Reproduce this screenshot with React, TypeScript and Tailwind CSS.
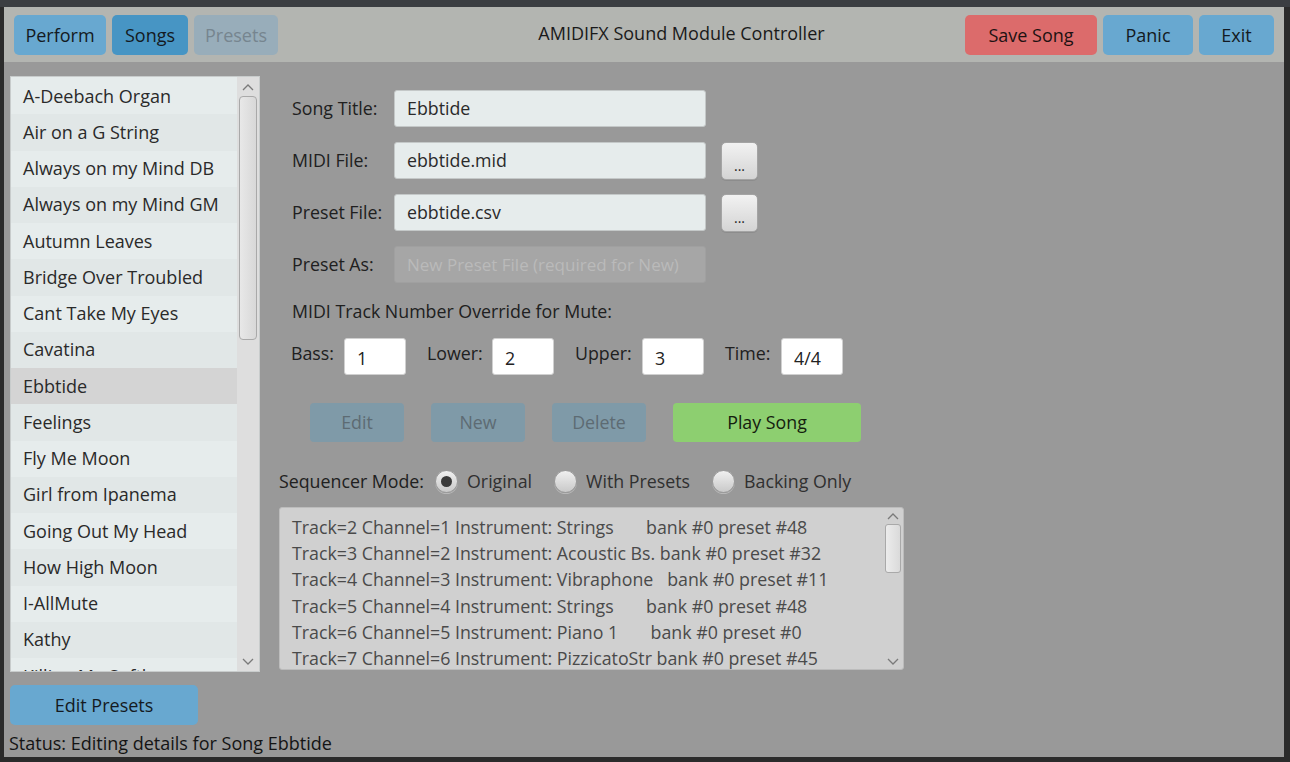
import React from 'react';

const songs = [
    'A-Deebach Organ',
    'Air on a G String',
    'Always on my Mind DB',
    'Always on my Mind GM',
    'Autumn Leaves',
    'Bridge Over Troubled',
    'Cant Take My Eyes',
    'Cavatina',
    'Ebbtide',
    'Feelings',
    'Fly Me Moon',
    'Girl from Ipanema',
    'Going Out My Head',
    'How High Moon',
    'I-AllMute',
    'Kathy',
    'Killing Me Softly',
];

const tracks = [
    'Track=2 Channel=1 Instrument: Strings       bank #0 preset #48',
    'Track=3 Channel=2 Instrument: Acoustic Bs. bank #0 preset #32',
    'Track=4 Channel=3 Instrument: Vibraphone   bank #0 preset #11',
    'Track=5 Channel=4 Instrument: Strings       bank #0 preset #48',
    'Track=6 Channel=5 Instrument: Piano 1       bank #0 preset #0',
    'Track=7 Channel=6 Instrument: PizzicatoStr bank #0 preset #45',
];

const Chevron = ({ up }: { up?: boolean }) => (
    <svg width="12" height="8" viewBox="0 0 12 8" className="block">
        <path
            d={up ? 'M1 7 L6 2 L11 7' : 'M1 1 L6 6 L11 1'}
            fill="none"
            stroke="#7a7a7a"
            strokeWidth="1.3"
        />
    </svg>
);

const Radio = ({ checked, label }: { checked?: boolean; label: string }) => (
    <div className="flex items-center gap-[9px]">
        <div className="w-[23px] h-[23px] rounded-full border border-[#9c9c9c] bg-gradient-to-b from-[#f0f0f0] to-[#c9c9c9] flex items-center justify-center shadow-[0_1px_0_#b8b8b8]">
            {checked && <div className="w-[11px] h-[11px] rounded-full bg-[#3a3a3a]" />}
        </div>
        <span className="text-[#303030]">{label}</span>
    </div>
);

const TopButton = ({ label, cls }: { label: string; cls: string }) => (
    <button className={`h-[40px] rounded-[5px] text-[18px] pt-[2px] ${cls}`}>{label}</button>
);

const FieldRow = ({
    label,
    value,
    browse,
    disabled,
}: {
    label: string;
    value: string;
    browse?: boolean;
    disabled?: boolean;
}) => (
    <div className="flex items-center h-[37px]">
        <span className="w-[102px] text-[#202020]">{label}</span>
        <div
            className={`w-[312px] h-[37px] rounded-[3px] border flex items-center px-[12px] whitespace-nowrap overflow-hidden ${
                disabled
                    ? 'bg-[#a6a6a6] border-[#a0a0a0] text-[#bababa] text-[17px]'
                    : 'bg-[#e6ecec] border-[#c4c8c8] text-[#2a2a2a]'
            }`}
        >
            {value}
        </div>
        {browse && (
            <div className="ml-[15px] w-[37px] h-[38px] rounded-[5px] border border-[#a4a4a4] bg-gradient-to-b from-[#f2f2f2] to-[#d4d4d4] flex items-end justify-center pb-[6px] text-[14px] leading-none text-[#222] shadow-[0_1px_0_#8c8c8c]">
                ...
            </div>
        )}
    </div>
);

const SmallField = ({ label, value, labelW }: { label: string; value: string; labelW: string }) => (
    <div className="flex items-start">
        <span className={`${labelW} pt-[2px] text-[#202020]`}>{label}</span>
        <div className="w-[62px] h-[37px] bg-white rounded-[3px] border border-[#d0d0d0] flex items-center px-[12px] pt-[4px] text-[#222]">
            {value}
        </div>
    </div>
);

export default function App() {
    return (
        <div
            className="w-[1290px] h-[762px] bg-[#2b2b2b] overflow-hidden"
            style={{ fontFamily: '"Open Sans", "Noto Sans", sans-serif' }}
        >
            <div className="h-[7px] bg-[#3b3e42]" />
            <div className="ml-[4px] w-[1280px] h-[750px] bg-[#999999] flex flex-col text-[17.8px]">
                {/* top bar */}
                <div className="h-[56px] bg-[#b3b5b1] flex items-center pl-[10px] pr-[10px]">
                    <div className="flex gap-[6px]">
                        <TopButton label="Perform" cls="w-[92px] bg-[#68a8d0] text-[#141a22]" />
                        <TopButton label="Songs" cls="w-[76px] bg-[#4795c4] text-[#141a22]" />
                        <TopButton label="Presets" cls="w-[84px] bg-[#98adba] text-[#76858f]" />
                    </div>
                    <div className="flex-1 text-center text-[18px] text-[#1a1a1a] pl-[120px] -mt-[2px]">
                        AMIDIFX Sound Module Controller
                    </div>
                    <div className="flex gap-[6px]">
                        <TopButton label="Save Song" cls="w-[132px] bg-[#dc6b6b] text-[#1e1212]" />
                        <TopButton label="Panic" cls="w-[90px] bg-[#68a8d0] text-[#141a22]" />
                        <TopButton label="Exit" cls="w-[75px] bg-[#68a8d0] text-[#141a22]" />
                    </div>
                </div>

                <div className="flex flex-1">
                    {/* left column */}
                    <div className="pl-[6px] pt-[14px] flex flex-col w-[275px]">
                        <div className="w-[250px] h-[596px] flex bg-[#e6ecec] border border-[#c8cccc] overflow-hidden">
                            <div className="flex-1 overflow-hidden pt-[1px]">
                                {songs.map((s, i) => (
                                    <div
                                        key={s}
                                        className={`h-[36.25px] flex items-center pl-[12px] text-[18px] text-[#2a2a2a] whitespace-nowrap ${
                                            s === 'Ebbtide'
                                                ? 'bg-[#d4d4d4]'
                                                : i % 2 === 0
                                                  ? 'bg-[#e6ecec]'
                                                  : 'bg-[#e1e7e7]'
                                        }`}
                                    >
                                        {s}
                                    </div>
                                ))}
                            </div>
                            <div className="w-[22px] bg-[#dedede] flex flex-col items-center pt-[6px] pb-[5px]">
                                <Chevron up />
                                <div className="mt-[5px] w-[18px] h-[244px] rounded-[4px] border border-[#a9a9a9] bg-gradient-to-r from-[#e8e8e8] to-[#d8d8d8]" />
                                <div className="flex-1" />
                                <Chevron />
                            </div>
                        </div>
                        <button className="mt-[13px] w-[188px] h-[40px] rounded-[5px] bg-[#68a8d0] text-[18px] text-[#141a22]">
                            Edit Presets
                        </button>
                        <div className="mt-[5px] -ml-[1px] text-[18px] text-[#141414] whitespace-nowrap">
                            Status: Editing details for Song Ebbtide
                        </div>
                    </div>

                    {/* right form */}
                    <div className="pt-[28px] flex flex-col">
                        <div className="pl-[13px] flex flex-col gap-[15px]">
                            <FieldRow label="Song Title:" value="Ebbtide" />
                            <FieldRow label="MIDI File:" value="ebbtide.mid" browse />
                            <FieldRow label="Preset File:" value="ebbtide.csv" browse />
                            <FieldRow label="Preset As:" value="New Preset File (required for New)" disabled />
                        </div>
                        <div className="pl-[13px] mt-[15px] text-[#202020]">MIDI Track Number Override for Mute:</div>
                        <div className="pl-[12px] mt-[13px] flex gap-[21px]">
                            <SmallField label="Bass:" value="1" labelW="w-[53px]" />
                            <SmallField label="Lower:" value="2" labelW="w-[65px]" />
                            <SmallField label="Upper:" value="3" labelW="w-[67px]" />
                            <SmallField label="Time:" value="4/4" labelW="w-[56px]" />
                        </div>
                        <div className="pl-[31px] mt-[28px] flex gap-[27px]">
                            <button className="w-[94px] h-[39px] rounded-[4px] bg-[#7f9aa8] text-[#5d6b73]">Edit</button>
                            <button className="w-[94px] h-[39px] rounded-[4px] bg-[#7f9aa8] text-[#5d6b73]">New</button>
                            <button className="w-[94px] h-[39px] rounded-[4px] bg-[#7f9aa8] text-[#5d6b73]">Delete</button>
                            <button className="w-[188px] h-[39px] rounded-[4px] bg-[#8dcf70] text-[#14200e]">
                                Play Song
                            </button>
                        </div>
                        <div className="mt-[27px] flex items-center h-[26px] text-[#202020]">
                            <span className="mr-[11px]">Sequencer Mode:</span>
                            <div className="flex gap-[22px]">
                                <Radio checked label="Original" />
                                <Radio label="With Presets" />
                                <Radio label="Backing Only" />
                            </div>
                        </div>
                        <div className="mt-[12px] w-[625px] h-[163px] rounded-[3px] border border-[#bcbcbc] bg-[#d0d0d0] flex overflow-hidden">
                            <div className="flex-1 pl-[12px] pt-[6px] overflow-hidden">
                                {tracks.map((t) => (
                                    <div key={t} className="h-[26.3px] leading-[26px] whitespace-pre text-[#4a4a4a]">
                                        {t}
                                    </div>
                                ))}
                            </div>
                            <div className="w-[20px] flex flex-col items-center pt-[4px] pb-[3px]">
                                <Chevron up />
                                <div className="mt-[4px] w-[16px] h-[49px] rounded-[3px] border border-[#a9a9a9] bg-gradient-to-r from-[#ececec] to-[#dadada]" />
                                <div className="flex-1" />
                                <Chevron />
                            </div>
                        </div>
                    </div>
                </div>
            </div>
        </div>
    );
}
